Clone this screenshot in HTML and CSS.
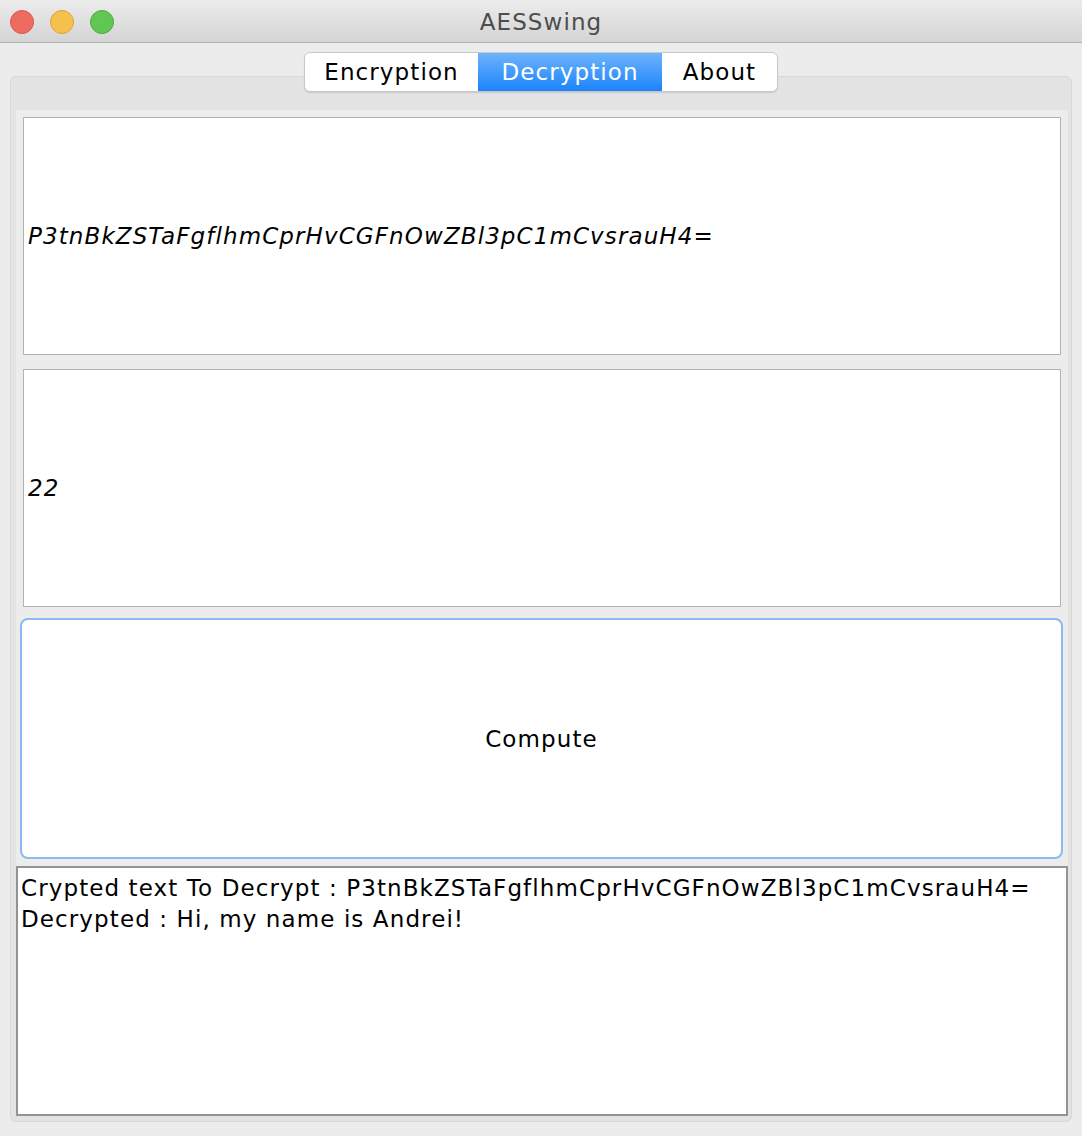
FILE: index.html
```html
<!DOCTYPE html>
<html>
<head>
<meta charset="utf-8">
<title>AESSwing</title>
<link rel="stylesheet" href="styles.css">
</head>
<body>
<div class="window">
  <div class="titlebar">
    <div class="lights">
      <span class="light red"></span>
      <span class="light yellow"></span>
      <span class="light green"></span>
    </div>
    <div class="title">AESSwing</div>
  </div>
  <div class="body">
    <div class="tabs">
      <div class="tab tab-enc">Encryption</div>
      <div class="tab tab-dec selected">Decryption</div>
      <div class="tab tab-about">About</div>
    </div>
    <div class="pane">
      <div class="inner">
        <div class="field"><span class="field-text">P3tnBkZSTaFgflhmCprHvCGFnOwZBl3pC1mCvsrauH4=</span></div>
        <div class="field field2"><span class="field-text">22</span></div>
        <div class="button">Compute</div>
        <div class="output">
          <div class="line">Crypted text To Decrypt : P3tnBkZSTaFgflhmCprHvCGFnOwZBl3pC1mCvsrauH4=</div>
          <div class="line">Decrypted : Hi, my name is Andrei!</div>
        </div>
      </div>
    </div>
  </div>
</div>
</body>
</html>
```
FILE: styles.css
```css
html, body {
  margin: 0;
  padding: 0;
}
body {
  background: #ececec;
  font-family: "DejaVu Sans", "Liberation Sans", sans-serif;
  color: #000;
}
.window {
  width: 1082px;
  height: 1136px;
  display: flex;
  flex-direction: column;
  overflow: hidden;
}
.titlebar {
  height: 42px;
  border-bottom: 1px solid #b3b3b3;
  background: linear-gradient(#ececec, #d4d4d4);
  display: flex;
  align-items: center;
  position: relative;
}
.lights {
  display: flex;
  gap: 16px;
  padding-left: 10px;
  padding-top: 2px;
}
.light {
  width: 24px;
  height: 24px;
  border-radius: 50%;
  box-sizing: border-box;
}
.red { background: #ee6b60; border: 1px solid #d8574c; }
.yellow { background: #f6c04f; border: 1px solid #dea43a; }
.green { background: #62c655; border: 1px solid #4fa842; }
.title {
  position: absolute;
  left: 0;
  right: 0;
  top: 2px;
  bottom: 0;
  display: flex;
  align-items: center;
  justify-content: center;
  font-size: 23px;
  letter-spacing: 1.1px;
  color: #4d4d4d;
}
.body {
  flex: 1;
  display: flex;
  flex-direction: column;
  padding: 0 10px 14px 10px;
}
.tabs {
  align-self: center;
  margin-top: 9px;
  height: 40px;
  display: flex;
  position: relative;
  z-index: 1;
  background: #fff;
  border: 1px solid #c8c8c8;
  border-radius: 6px;
  box-sizing: border-box;
  box-shadow: 0 1px 1px rgba(0,0,0,0.12);
  overflow: hidden;
}
.tab {
  display: flex;
  align-items: center;
  justify-content: center;
  font-size: 23px;
  letter-spacing: 1.1px;
  color: #000;
}
.tab-enc { width: 173px; }
.tab-dec { width: 184px; }
.tab-about { width: 115px; }
.tab.selected {
  background: linear-gradient(#6db4fb, #1b83fb);
  color: #fff;
}
.pane {
  flex: 1;
  margin-top: -16px;
  background: #e3e3e3;
  border: 1px solid #d8d8d8;
  border-radius: 6px;
  padding: 33px 3px 5px 5px;
  display: flex;
  flex-direction: column;
  box-sizing: border-box;
}
.inner {
  flex: 1;
  background: #ececec;
  display: flex;
  flex-direction: column;
  padding-top: 7px;
}
.field {
  margin: 0 7px;
  height: 238px;
  box-sizing: border-box;
  border: 1px solid #b2b2b2;
  background: #fff;
  display: flex;
  align-items: center;
  padding-left: 4px;
}
.field2 {
  margin-top: 14px;
}
.field-text {
  font-style: italic;
  font-size: 23px;
  letter-spacing: 1.1px;
}
.button {
  margin: 11px 5px 0 4px;
  height: 241px;
  box-sizing: border-box;
  border: 2px solid #8cb9ef;
  border-radius: 8px;
  background: #fff;
  display: flex;
  align-items: center;
  justify-content: center;
  font-size: 23px;
  letter-spacing: 1.1px;
}
.output {
  margin-top: 7px;
  flex: 1;
  box-sizing: border-box;
  border: 2px solid #939393;
  background: #fff;
  padding: 5px 3px;
}
.line {
  font-size: 23px;
  letter-spacing: 1.1px;
  line-height: 31px;
  white-space: nowrap;
}
```
